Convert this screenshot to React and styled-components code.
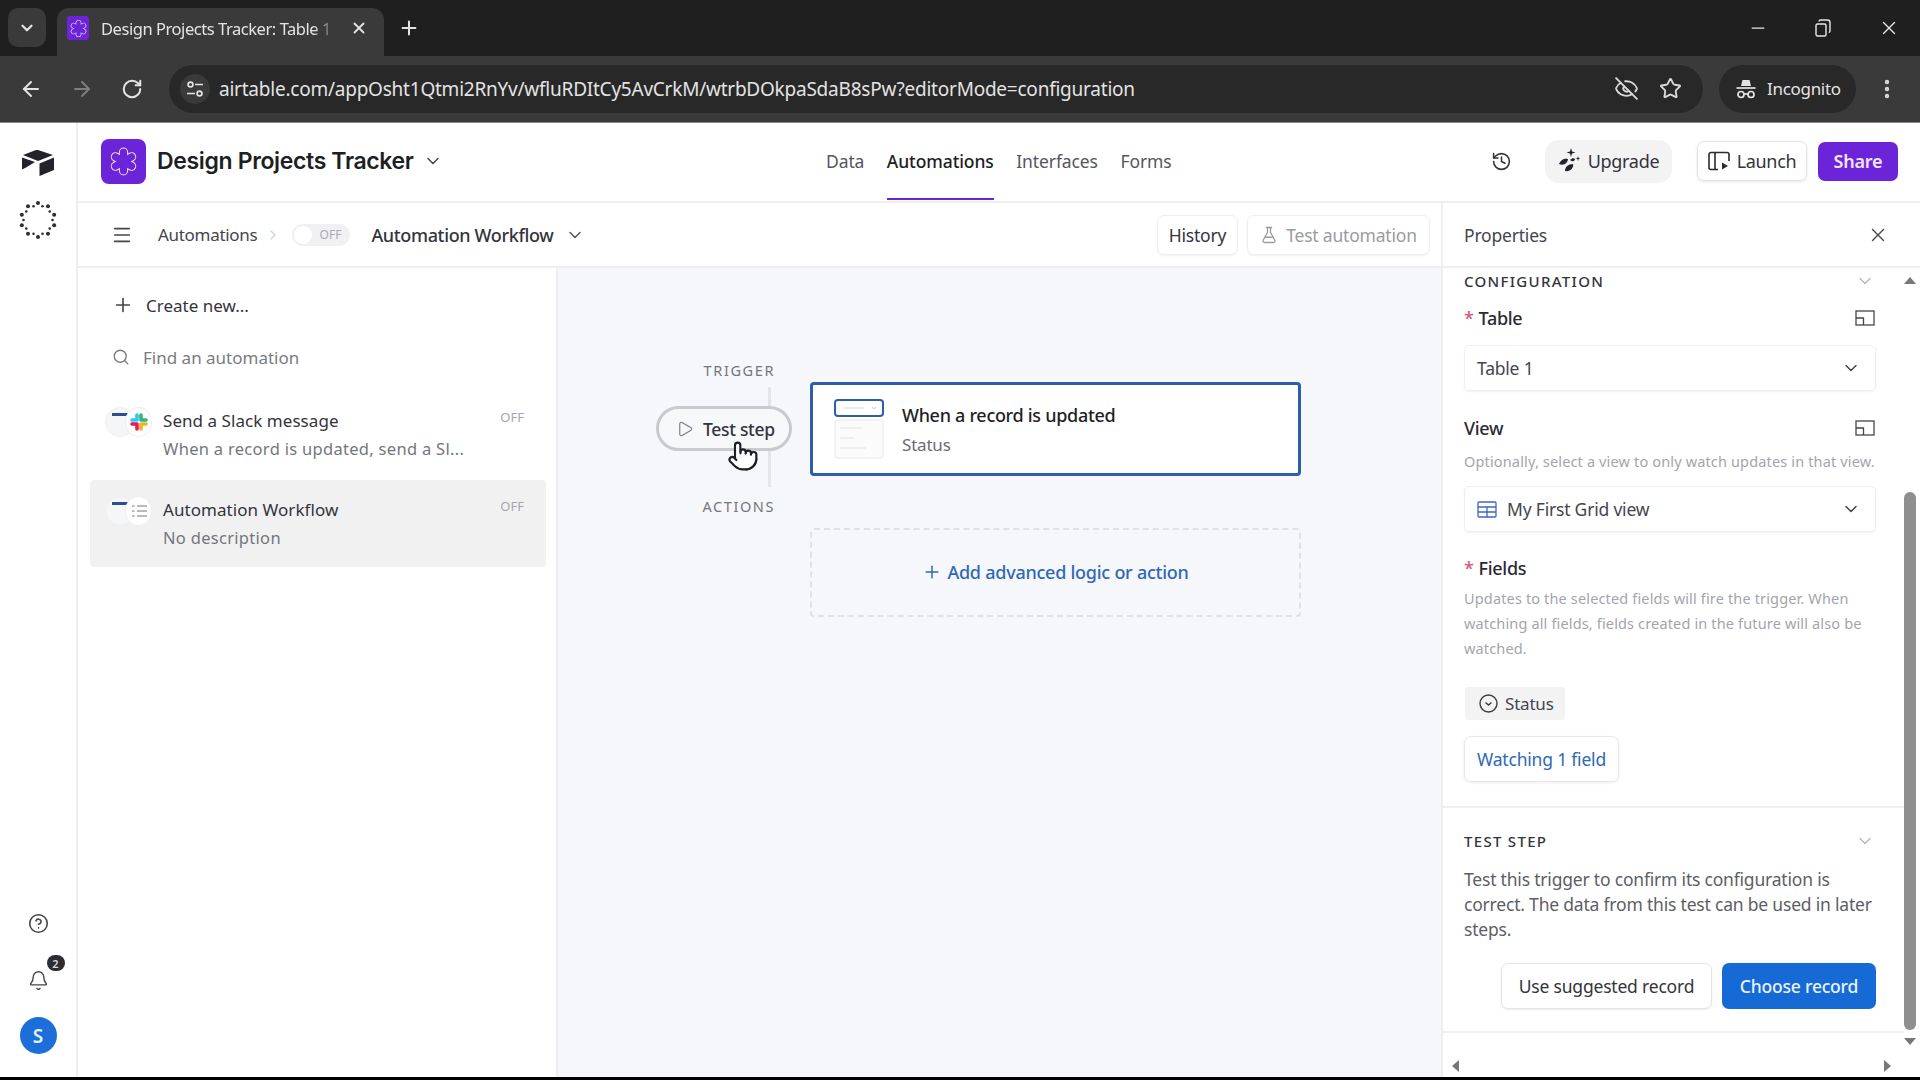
import React from "react";
import styled, { createGlobalStyle } from "styled-components";
import {
  ArrowLeft,
  ArrowRight,
  Bell,
  ChevronDown,
  CircleHelp,
  EyeOff,
  FlaskConical,
  History,
  Menu,
  Minus,
  MoreVertical,
  Play,
  Plus,
  Pointer,
  RotateCw,
  Search,
  Star,
  X,
} from "lucide-react";

const GlobalStyle = createGlobalStyle`
  html, body {
    margin: 0;
    padding: 0;
    background: #fff;
    font-family: "Noto Sans", "Open Sans", sans-serif;
    color: #1d1f25;
  }
  * { box-sizing: border-box; }
`;

function AppMark({ size }) {
  const angles = [0, 60, 120];
  return (
    <svg width={size} height={size} viewBox="0 0 24 24">
      {angles.map((a) => (
        <rect key={a} x="9.200" y="2" width="5.600" height="20" rx="2.800" fill="none" stroke="#f3dcff" strokeWidth="1.600" transform={`rotate(${a} 12 12)`} />
      ))}
      {angles.map((a) => (
        <rect key={a} x="9.200" y="2" width="5.600" height="20" rx="2.800" fill="#6b24d8" transform={`rotate(${a} 12 12)`} />
      ))}
    </svg>
  );
}

function AirtableLogo() {
  return (
    <svg width="34" height="28" viewBox="0 0 34 28">
      <path d="M15 1 2 6l15 6 15-6-15-5Z" fill="#23232b" />
      <path d="M18.500 14.500V27L33 21V8.500l-14.500 6Z" fill="#23232b" />
      <path d="M1 8.500v12l4 -2 9-5.500-13-4.500Z" fill="#23232b" />
    </svg>
  );
}

function LoaderRing() {
  const dots = Array.from({ length: 20 }, (_, i) => i);
  return (
    <svg width="38" height="38" viewBox="0 0 38 38">
      {dots.map((i) => {
        const t = (i / 20) * Math.PI * 2;
        const r = i % 2 ? 17 : 14.5;
        return <circle key={i} cx={19 + r * Math.cos(t)} cy={19 + r * Math.sin(t)} r={i % 2 ? 2 : 1.3} fill="#2e2e36" />;
      })}
    </svg>
  );
}

function TuneIcon() {
  return (
    <svg width="20" height="20" viewBox="0 0 20 20" fill="none" stroke="#e3e3e3" strokeWidth="1.7">
      <circle cx="5.500" cy="5.500" r="2.400" />
      <path d="M10 5.500h8M2 14.500h8" />
      <circle cx="14.500" cy="14.500" r="2.400" />
    </svg>
  );
}

function RestoreIcon() {
  return (
    <svg width="16" height="18" viewBox="0 0 16 18" fill="none" stroke="#e8e8e8" strokeWidth="1.400">
      <rect x="1" y="5" width="10" height="12" rx="1.500" />
      <path d="M4 2.500C4 1.600 4.600 1 5.500 1h7C14 1 15 2 15 3.500V12c0 .8-.6 1.400-1.300 1.400" />
    </svg>
  );
}

function IncognitoIcon() {
  return (
    <svg width="22" height="22" viewBox="0 0 22 22" fill="none" stroke="#e3e3e3" strokeWidth="1.700">
      <path d="M6 8l1.500-6h7L16 8" fill="#e3e3e3" stroke="none" />
      <path d="M1.500 10h19" />
      <circle cx="6" cy="16.500" r="3" />
      <circle cx="16" cy="16.500" r="3" />
      <path d="M9 16h4" />
    </svg>
  );
}

function UpgradeIcon() {
  return (
    <svg width="24" height="26" viewBox="0 0 24 26" fill="#23232b">
      <path d="M13 0l1 3.500 3.500 1-3.500 1-1 3.500-1-3.500-3.500-1 3.500-1z" />
      <path d="M20 8l.6 1.900 1.900.6-1.900.6-.6 1.900-.6-1.900-1.900-.6 1.900-.6z" />
      <path d="M1 16c2-5 6-6 9-5-.5 4-4 7-9 5Z" />
      <path d="M7 23c0-4 3-7 8-7 1 4-3 8-8 7Z" />
      <path d="M12 12c2-2 4-2 5-1-.4 2-2 3.500-5 1Z" />
    </svg>
  );
}

function LaunchIcon() {
  return (
    <svg width="22" height="20" viewBox="0 0 22 20" fill="none" stroke="#2a2a33" strokeWidth="1.600">
      <path d="M10 18.500H3a2 2 0 0 1-2-2v-13a2 2 0 0 1 2-2h16a2 2 0 0 1 2 2V10" />
      <path d="M7 1.500v17" />
      <path d="M14 11.500l6 3.500-6 3.500z" fill="#2a2a33" stroke="none" />
    </svg>
  );
}

function SlackLogo() {
  return (
    <svg width="18" height="18" viewBox="0 0 18 18" fill="none" strokeWidth="3.600" strokeLinecap="round">
      <path d="M7 2v5" stroke="#36c5f0" />
      <path d="M2 7h3" stroke="#36c5f0" />
      <path d="M16 7h-5" stroke="#2eb67d" />
      <path d="M11 2v3" stroke="#2eb67d" />
      <path d="M11 16v-5" stroke="#ecb22e" />
      <path d="M16 11h-3" stroke="#ecb22e" />
      <path d="M2 11h5" stroke="#e01e5a" />
      <path d="M7 16v-3" stroke="#e01e5a" />
    </svg>
  );
}

function ChecklistIcon() {
  return (
    <svg width="16" height="14" viewBox="0 0 16 14" fill="none" stroke="#a3a4aa" strokeWidth="1.400">
      <path d="M6 2h10M6 7h10M6 12h10M1 2h2.500M1 7h2.500M1 12h2.500" />
    </svg>
  );
}

function ExpandIcon() {
  return (
    <svg width="20" height="16" viewBox="0 0 20 16" fill="none" stroke="#44454d" strokeWidth="1.300">
      <rect x="1" y="1" width="18" height="14" />
      <path d="M1 8h7.500v7" />
    </svg>
  );
}

function GridIcon() {
  return (
    <svg width="20" height="17" viewBox="0 0 20 17" fill="none" stroke="#3f66c4" strokeWidth="1.300">
      <rect x="1" y="1" width="18" height="15" rx="1" />
      <path d="M1 6h18M1 11h18M10 6v10" />
    </svg>
  );
}

function StatusIcon() {
  return (
    <svg width="19" height="19" viewBox="0 0 19 19" fill="none" stroke="#3b3c44" strokeWidth="1.400">
      <circle cx="9.500" cy="9.500" r="8.500" />
      <path d="M6.500 8.500l3 2.500 3-2.500" />
    </svg>
  );
}

function TriggerThumb() {
  return (
    <svg width="50" height="60" viewBox="0 0 50 60" fill="none">
      <rect x="1" y="1" width="48" height="16" rx="3" fill="#fff" stroke="#2d5ea8" strokeWidth="2" />
      <path d="M10 9h20" stroke="#e8ebf0" strokeWidth="2" />
      <path d="M38 8l2 2 2-2" stroke="#c8cad0" strokeWidth="1" />
      <rect x="1" y="21" width="48" height="38" rx="3" fill="#fbfbfc" stroke="#f0f0f2" strokeWidth="1.500" />
      <path d="M6 29h22M6 39h14M6 49h26" stroke="#eeeff1" strokeWidth="2" />
    </svg>
  );
}

const Page = styled.div`
  width: 1920px;
  height: 1080px;
  display: flex;
  flex-direction: column;
  overflow: hidden;
  background: #fff;
`;

const TabStrip = styled.div`
  height: 56px;
  flex: none;
  background: #1f1f1f;
  display: flex;
  align-items: flex-end;
  padding-left: 8px;
`;

const TabSearch = styled.div`
  width: 38px;
  height: 39px;
  margin-bottom: 9px;
  border-radius: 10px;
  background: #3a3a3a;
  color: #e3e3e3;
  display: flex;
  align-items: center;
  justify-content: center;
`;

const Tab = styled.div`
  width: 327px;
  height: 48px;
  margin-left: 11px;
  padding: 0 16px 8px 10px;
  border-radius: 12px 12px 0 0;
  background: #3a3a3a;
  color: #e3e3e3;
  display: flex;
  align-items: center;
`;

const Favicon = styled.div`
  width: 22px;
  height: 24px;
  border-radius: 3px;
  background: #6b24d8;
  display: flex;
  align-items: center;
  justify-content: center;
`;

const TabTitle = styled.span`
  margin-left: 12px;
  width: 236px;
  overflow: hidden;
  white-space: nowrap;
  font-size: 16.500px;
  letter-spacing: -0.45px;
  -webkit-mask-image: linear-gradient(90deg, #000 90%, transparent);
`;

const TabClose = styled.div`
  margin-left: 13px;
  display: flex;
`;

const NewTab = styled.div`
  margin: 0 0 17px 14px;
  color: #e3e3e3;
  display: flex;
`;

const WindowControls = styled.div`
  margin-left: auto;
  height: 56px;
  display: flex;
  align-items: center;
  gap: 47px;
  padding-right: 20px;
  color: #e8e8e8;
`;

const Toolbar = styled.div`
  height: 67px;
  flex: none;
  background: #3a3a3a;
  display: flex;
  align-items: center;
  padding: 0 0 1px 19px;
  border-bottom: 1px solid #8a8a8a;
`;

const NavButtons = styled.div`
  display: flex;
  align-items: center;
  gap: 27px;
  color: #e3e3e3;
`;

const AddressBar = styled.div`
  width: 1534px;
  height: 48px;
  margin-left: 26px;
  border-radius: 24px;
  background: #282828;
  display: flex;
  align-items: center;
  padding: 0 21px 0 11px;
`;

const SiteIcon = styled.div`
  width: 30px;
  height: 30px;
  border-radius: 50%;
  background: #3a3a3a;
  display: flex;
  align-items: center;
  justify-content: center;
`;

const UrlText = styled.span`
  margin-left: 9px;
  font-size: 19px;
  letter-spacing: -0.23px;
  color: #e3e3e3;
  white-space: nowrap;
`;

const AddressActions = styled.div`
  margin-left: auto;
  display: flex;
  align-items: center;
  gap: 20px;
  color: #d8d8d8;
`;

const IncognitoPill = styled.div`
  width: 137px;
  height: 48px;
  margin-left: 16px;
  border-radius: 24px;
  background: #282828;
  color: #e3e3e3;
  display: flex;
  align-items: center;
  gap: 10px;
  padding-left: 16px;
  font-size: 17px;
  letter-spacing: -0.3px;
`;

const ToolbarMenu = styled.div`
  margin-left: 19px;
  color: #d8d8d8;
  display: flex;
`;

const Body = styled.div`
  flex: 1;
  min-height: 0;
  display: flex;
`;

const Rail = styled.div`
  width: 78px;
  flex: none;
  border-right: 2px solid #efeff1;
  display: flex;
  flex-direction: column;
  align-items: center;
  padding: 26px 0 23px;
`;

const RailGroup = styled.div`
  display: flex;
  flex-direction: column;
  align-items: center;
  gap: ${(p) => p.$gap}px;
  margin-top: ${(p) => p.$top || 0};
  color: #44454d;
`;

const BellWrap = styled.div`
  position: relative;
  margin-top: 10px;
  display: flex;
`;

const BellBadge = styled.span`
  position: absolute;
  top: -15px;
  right: -16px;
  width: 18px;
  height: 16px;
  border-radius: 9px;
  background: #2c2c32;
  color: #d8d8d8;
  font-size: 11px;
  font-weight: 600;
  display: flex;
  align-items: center;
  justify-content: center;
`;

const Avatar = styled.div`
  width: 37px;
  height: 37px;
  border-radius: 50%;
  background: #1c6fd8;
  color: #e6f2ff;
  font-size: 19px;
  font-weight: 600;
  display: flex;
  align-items: center;
  justify-content: center;
`;

const Main = styled.div`
  flex: 1;
  min-width: 0;
  display: flex;
  flex-direction: column;
`;

const TopBar = styled.div`
  height: 80px;
  flex: none;
  border-bottom: 2px solid #efeff1;
  display: flex;
  align-items: center;
  padding: 0 22px 2px 23px;
`;

const Brand = styled.div`
  width: 725px;
  display: flex;
  align-items: center;
`;

const BrandMark = styled.div`
  width: 45px;
  height: 45px;
  border-radius: 8px;
  background: #6b24d8;
  display: flex;
  align-items: center;
  justify-content: center;
`;

const BrandName = styled.span`
  margin-left: 11px;
  font-family: Inter, sans-serif;
  font-size: 23px;
  font-weight: 600;
  letter-spacing: -0.35px;
  white-space: nowrap;
`;

const BrandCaret = styled.span`
  display: flex;
  margin-left: 9px;
  color: #44454d;
`;

const NavTabs = styled.div`
  height: 78px;
  display: flex;
  gap: 22.500px;
`;

const NavTab = styled.div`
  height: 100%;
  display: flex;
  align-items: center;
  font-size: 17.500px;
  font-weight: ${(p) => (p.$active ? 500 : 400)};
  color: ${(p) => (p.$active ? "#1d1f25" : "#55565e")};
  box-shadow: ${(p) => (p.$active ? "inset 0 -2px 0 #6b24d8" : "none")};
  letter-spacing: -0.1px;
`;

const TopActions = styled.div`
  margin-left: auto;
  display: flex;
  align-items: center;
`;

const HistoryNudge = styled.span`
  display: flex;
  margin-right: 2px;
`;

const UpgradePill = styled.div`
  width: 127px;
  height: 43px;
  margin-left: 31px;
  border-radius: 14px;
  background: #f3f3f4;
  display: flex;
  align-items: center;
  justify-content: center;
  gap: 6px;
  font-size: 18px;
  color: #33343c;
  letter-spacing: -0.3px;
`;

const LaunchButton = styled.div`
  width: 110px;
  height: 40px;
  margin-left: 25px;
  border-radius: 7px;
  border: 1px solid #e4e4e8;
  box-shadow: 0 1px 3px rgba(0, 0, 0, 0.1);
  display: flex;
  align-items: center;
  justify-content: center;
  gap: 7px;
  font-size: 18px;
  color: #33343c;
  letter-spacing: -0.35px;
`;

const ShareButton = styled.div`
  width: 80px;
  height: 39px;
  margin-left: 11px;
  border-radius: 7px;
  background: #6b24d8;
  color: #f3e5ff;
  font-size: 18px;
  font-weight: 600;
  letter-spacing: -0.2px;
  display: flex;
  align-items: center;
  justify-content: center;
`;

const SubBar = styled.div`
  height: 65px;
  flex: none;
  border-bottom: 2px solid #efeff1;
  display: flex;
`;

const SubLeft = styled.div`
  flex: 1;
  display: flex;
  align-items: center;
  padding: 0 11px 0 33px;
`;

const Crumb = styled.span`
  margin-left: 25px;
  font-size: 17px;
  color: #44454d;
  letter-spacing: -0.3px;
`;

const CrumbArrow = styled.span`
  margin-left: 8px;
  display: flex;
  color: #d2d3d8;
`;

const Toggle = styled.div`
  width: 58px;
  height: 22px;
  margin-left: 11px;
  border-radius: 11px;
  background: #f1f1f3;
  display: flex;
  align-items: center;
  justify-content: flex-end;
  padding-right: 9px;
  position: relative;
  font-size: 12px;
  color: #a9aab0;

  &::before {
    content: "";
    position: absolute;
    left: 2px;
    top: 2px;
    width: 18px;
    height: 18px;
    border-radius: 50%;
    background: #fff;
  }
`;

const WorkflowName = styled.span`
  margin-left: 21px;
  font-size: 18px;
  font-weight: 500;
  color: #33343c;
  letter-spacing: -0.35px;
  white-space: nowrap;
`;

const WorkflowCaret = styled.span`
  margin-left: 12px;
  display: flex;
  color: #55565e;
`;

const HeaderButton = styled.div`
  height: 40px;
  width: ${(p) => p.$w}px;
  margin-left: ${(p) => p.$ml || 0};
  border-radius: 7px;
  border: 1px solid #eeeef0;
  box-shadow: 0 1px 2px rgba(0, 0, 0, 0.06);
  display: flex;
  align-items: center;
  justify-content: center;
  gap: 8px;
  font-size: 17.500px;
  letter-spacing: -0.2px;
  color: ${(p) => (p.$muted ? "#9a9ba1" : "#33343c")};
`;

const SubRight = styled.div`
  width: 479px;
  flex: none;
  border-left: 2px solid #efeff1;
  display: flex;
  align-items: center;
  justify-content: space-between;
  padding: 0 31px 0 21px;
  font-size: 17.500px;
  color: #44454d;
  letter-spacing: -0.2px;
`;

const Content = styled.div`
  flex: 1;
  min-height: 0;
  display: flex;
`;

const Sidebar = styled.div`
  width: 480px;
  flex: none;
  border-right: 2px solid #efeff1;
  padding: 19px 10px 0 12px;
`;

const SideAction = styled.div`
  height: 36px;
  margin-top: ${(p) => p.$mt || 0}px;
  padding-left: ${(p) => p.$pad}px;
  display: flex;
  align-items: center;
  gap: ${(p) => p.$gap}px;
  font-size: 17px;
  letter-spacing: 0;
  color: ${(p) => (p.$muted ? "#7a7b82" : "#33343c")};
`;

const AutomationList = styled.div`
  margin-top: 16px;
  display: flex;
  flex-direction: column;
  gap: 2px;
`;

const AutomationItem = styled.div`
  height: 87px;
  padding: 16px 22px 0 15px;
  border-radius: 4px;
  background: ${(p) => (p.$active ? "#f1f1f2" : "transparent")};
  display: flex;
`;

const IconPair = styled.div`
  width: 48px;
  height: 32px;
  flex: none;
  position: relative;
`;

const IconDisc = styled.div`
  position: absolute;
  top: 0;
  left: ${(p) => (p.$right ? "20px" : "0")};
  width: ${(p) => (p.$right ? "27px" : "30px")};
  height: 30px;
  border-radius: 50%;
  background: ${(p) => (p.$right ? "#fff" : "#f5f6f8")};
  border: 1px solid #eeeef1;
  display: flex;
  align-items: center;
  justify-content: center;

  &.bar::before {
    content: "";
    position: absolute;
    left: 6px;
    top: 5px;
    width: 16px;
    height: 3px;
    background: #2d4f8c;
  }
`;

const ItemText = styled.div`
  margin-left: 10px;
  flex: 1;
  min-width: 0;
`;

const ItemTitle = styled.div`
  margin-top: 1px;
  font-size: 17px;
  line-height: 26px;
  letter-spacing: 0.05px;
  color: #33343c;
`;

const ItemDesc = styled.div`
  margin-top: 3px;
  font-size: 16.500px;
  line-height: 24px;
  letter-spacing: 0.3px;
  color: #75767d;
  white-space: nowrap;
`;

const OffTag = styled.span`
  font-size: 13px;
  line-height: 20px;
  color: #a5a6ac;
`;

const Canvas = styled.div`
  flex: 1;
  min-width: 0;
  background: #f5f7fa;
  padding: 93px 0 0 98px;
  display: flex;
`;

const StepRail = styled.div`
  width: 136px;
  display: flex;
  flex-direction: column;
`;

const RailLabel = styled.div`
  margin-top: ${(p) => p.$mt || 0}px;
  padding-right: 17px;
  text-align: right;
  font-size: 14.500px;
  line-height: 18px;
  letter-spacing: 1.6px;
  color: #75767d;
`;

const Connector = styled.div`
  width: 3px;
  height: ${(p) => p.$h}px;
  margin: ${(p) => p.$mt || 0}px 0 0 112px;
  background: #e4e5e8;
`;

const TestStepPill = styled.div`
  height: 45px;
  border: 3px solid #c9cacd;
  border-radius: 23px;
  background: #f7f8fa;
  display: flex;
  align-items: center;
  gap: 9px;
  padding-left: 17px;
  font-size: 17.500px;
  font-weight: 500;
  letter-spacing: -0.3px;
  color: #33343c;
  position: relative;
`;

const HandCursor = styled.div`
  position: absolute;
  left: 68px;
  top: 31px;
  display: flex;
  color: #1d1f25;
`;

const StepColumn = styled.div`
  width: 491px;
  margin-left: 18px;
  padding-top: 21px;
`;

const TriggerCard = styled.div`
  height: 94px;
  border: 3px solid #2d5ea8;
  border-radius: 4px;
  background: #fff;
  display: flex;
  align-items: center;
  padding-left: 21px;
  gap: 18px;
`;

const CardTitle = styled.div`
  margin-top: 2px;
  font-size: 18px;
  font-weight: 500;
  line-height: 26px;
  letter-spacing: -0.3px;
`;

const CardSub = styled.div`
  margin-top: 4px;
  font-size: 17px;
  line-height: 26px;
  letter-spacing: -0.2px;
  color: #6a6b72;
`;

const AddAction = styled.div`
  height: 89px;
  margin-top: 52px;
  padding-bottom: 2px;
  border: 2px dashed #e0e1e6;
  border-radius: 4px;
  display: flex;
  align-items: center;
  justify-content: center;
  gap: 5px;
  font-size: 18px;
  font-weight: 500;
  letter-spacing: -0.25px;
  color: #2f68b8;
`;

const Properties = styled.div`
  width: 479px;
  flex: none;
  border-left: 2px solid #efeff1;
  display: flex;
  flex-direction: column;
  position: relative;
`;

const PropScroll = styled.div`
  flex: 1;
  min-height: 0;
  display: flex;
`;

const PropPane = styled.div`
  flex: 1;
  min-width: 0;
`;

const PropSection = styled.div`
  padding: ${(p) => p.$pad};
  border-bottom: ${(p) => (p.$line ? "2px solid #efeff1" : "none")};
`;

const SectionHead = styled.div`
  height: 26px;
  display: flex;
  align-items: center;
  justify-content: space-between;
  padding-right: 1px;
  font-size: 15px;
  font-weight: 500;
  letter-spacing: 1.3px;
  color: #33343c;
  text-transform: uppercase;
  svg {
    color: #b6b7bc;
  }
`;

const FieldLabel = styled.div`
  height: 24px;
  margin-top: ${(p) => p.$mt}px;
  display: flex;
  align-items: center;
  justify-content: space-between;
  font-size: 18px;
  font-weight: 500;
  letter-spacing: -0.3px;
  color: #2a2b33;
  padding-right: 1px;
`;

const Required = styled.span`
  color: #d8567a;
  margin-right: 5px;
`;

const Hint = styled.div`
  margin-top: ${(p) => p.$mt}px;
  font-size: 14.500px;
  line-height: 25px;
  letter-spacing: 0.15px;
  color: #a4a5ab;
`;

const SelectBox = styled.div`
  height: 46px;
  margin-top: ${(p) => p.$mt || 15}px;
  border: 1px solid #eeeef1;
  border-radius: 5px;
  box-shadow: 0 1px 2px rgba(0, 0, 0, 0.06);
  display: flex;
  align-items: center;
  gap: 10px;
  padding: 0 14px 0 12px;
  font-size: 17.500px;
  letter-spacing: -0.2px;
  color: #44454d;
  svg:last-child {
    margin-left: auto;
  }
`;

const FieldChip = styled.div`
  width: 100px;
  height: 33px;
  margin: 26px 0 0 1px;
  border-radius: 3px;
  background: #f3f3f4;
  display: flex;
  align-items: center;
  gap: 7px;
  padding-left: 14px;
  font-size: 17px;
  letter-spacing: -0.2px;
  color: #44454d;
`;

const WatchButton = styled.div`
  width: 155px;
  height: 46px;
  margin-top: 16px;
  border: 1px solid #e8e8ec;
  border-radius: 7px;
  box-shadow: 0 1px 3px rgba(0, 0, 0, 0.08);
  display: flex;
  align-items: center;
  justify-content: center;
  font-size: 17.500px;
  letter-spacing: -0.2px;
  color: #2f68b8;
`;

const TestCopy = styled.p`
  margin: 13px 0 0;
  font-size: 17.500px;
  line-height: 25px;
  letter-spacing: -0.2px;
  color: #5d5e66;
`;

const TestActions = styled.div`
  margin-top: 21px;
  display: flex;
  justify-content: flex-end;
  gap: 10px;
`;

const OutlineButton = styled.div`
  width: 211px;
  height: 46px;
  border: 1px solid #e4e4e8;
  border-radius: 7px;
  box-shadow: 0 1px 2px rgba(0, 0, 0, 0.08);
  display: flex;
  align-items: center;
  justify-content: center;
  font-size: 17.500px;
  letter-spacing: -0.2px;
  color: #33343c;
`;

const PrimaryButton = styled.div`
  width: 154px;
  height: 46px;
  border-radius: 7px;
  background: #166ad6;
  color: #e9f3ff;
  display: flex;
  align-items: center;
  justify-content: center;
  font-size: 17.500px;
  font-weight: 500;
  letter-spacing: -0.2px;
`;

const VScroll = styled.div`
  width: 16px;
  flex: none;
  position: relative;
  padding-top: 224px;
`;

const VThumb = styled.div`
  width: 12px;
  height: 538px;
  border-radius: 6px;
  background: #8f8f8f;
`;

const ScrollArrow = styled.div`
  position: absolute;
  width: 0;
  height: 0;
  border-style: solid;
  ${(p) => p.$pos}
`;

const HScroll = styled.div`
  height: 44px;
  flex: none;
  position: relative;
`;

const BottomEdge = styled.div`
  height: 3px;
  flex: none;
  background: #000;
`;

export default function App() {
  return (
    <Page>
      <GlobalStyle />
      <TabStrip>
        <TabSearch>
          <ChevronDown size={18} strokeWidth={3} />
        </TabSearch>
        <Tab>
          <Favicon>
            <AppMark size={19} />
          </Favicon>
          <TabTitle>Design Projects Tracker: Table 1</TabTitle>
          <TabClose>
            <X size={18} strokeWidth={2.4} />
          </TabClose>
        </Tab>
        <NewTab>
          <Plus size={22} strokeWidth={2.2} />
        </NewTab>
        <WindowControls>
          <Minus size={20} strokeWidth={1.5} />
          <RestoreIcon />
          <X size={22} strokeWidth={1.5} />
        </WindowControls>
      </TabStrip>

      <Toolbar>
        <NavButtons>
          <ArrowLeft size={24} strokeWidth={2} />
          <ArrowRight size={24} strokeWidth={2} color="#7d7d7d" />
          <RotateCw size={22} strokeWidth={2.2} />
        </NavButtons>
        <AddressBar>
          <SiteIcon>
            <TuneIcon />
          </SiteIcon>
          <UrlText>airtable.com/appOsht1Qtmi2RnYv/wfluRDItCy5AvCrkM/wtrbDOkpaSdaB8sPw?editorMode=configuration</UrlText>
          <AddressActions>
            <EyeOff size={25} strokeWidth={1.8} />
            <Star size={23} strokeWidth={2} />
          </AddressActions>
        </AddressBar>
        <IncognitoPill>
          <IncognitoIcon />
          Incognito
        </IncognitoPill>
        <ToolbarMenu>
          <MoreVertical size={24} strokeWidth={2.4} />
        </ToolbarMenu>
      </Toolbar>

      <Body>
        <Rail>
          <RailGroup $gap={24}>
            <AirtableLogo />
            <LoaderRing />
          </RailGroup>
          <RailGroup $gap={26} $top="auto">
            <CircleHelp size={21} strokeWidth={1.8} />
            <BellWrap>
              <Bell size={21} strokeWidth={1.6} />
              <BellBadge>2</BellBadge>
            </BellWrap>
            <Avatar>S</Avatar>
          </RailGroup>
        </Rail>

        <Main>
          <TopBar>
            <Brand>
              <BrandMark>
                <AppMark size={31} />
              </BrandMark>
              <BrandName>Design Projects Tracker</BrandName>
              <BrandCaret>
                <ChevronDown size={20} strokeWidth={1.8} />
              </BrandCaret>
            </Brand>
            <NavTabs>
              <NavTab>Data</NavTab>
              <NavTab $active>Automations</NavTab>
              <NavTab>Interfaces</NavTab>
              <NavTab>Forms</NavTab>
            </NavTabs>
            <TopActions>
              <HistoryNudge>
                <History size={21} strokeWidth={1.8} color="#33343c" />
              </HistoryNudge>
              <UpgradePill>
                <UpgradeIcon />
                Upgrade
              </UpgradePill>
              <LaunchButton>
                <LaunchIcon />
                Launch
              </LaunchButton>
              <ShareButton>Share</ShareButton>
            </TopActions>
          </TopBar>

          <SubBar>
            <SubLeft>
              <Menu size={22} strokeWidth={1.8} color="#44454d" />
              <Crumb>Automations</Crumb>
              <CrumbArrow>
                <ChevronDown size={16} style={{ transform: "rotate(-90deg)" }} />
              </CrumbArrow>
              <Toggle>OFF</Toggle>
              <WorkflowName>Automation Workflow</WorkflowName>
              <WorkflowCaret>
                <ChevronDown size={20} strokeWidth={1.8} />
              </WorkflowCaret>
              <HeaderButton $w={81} $ml="auto">History</HeaderButton>
              <HeaderButton $w={183} $ml="9px" $muted>
                <FlaskConical size={18} strokeWidth={1.7} />
                Test automation
              </HeaderButton>
            </SubLeft>
            <SubRight>
              Properties
              <X size={22} strokeWidth={1.5} color="#44454d" />
            </SubRight>
          </SubBar>

          <Content>
            <Sidebar>
              <SideAction $pad={22} $gap={12}>
                <Plus size={22} strokeWidth={1.8} color="#44454d" />
                Create new...
              </SideAction>
              <SideAction $mt={16} $pad={22} $gap={13} $muted>
                <Search size={18} strokeWidth={1.8} />
                Find an automation
              </SideAction>
              <AutomationList>
                <AutomationItem>
                  <IconPair>
                    <IconDisc className="bar" />
                    <IconDisc $right>
                      <SlackLogo />
                    </IconDisc>
                  </IconPair>
                  <ItemText>
                    <ItemTitle>Send a Slack message</ItemTitle>
                    <ItemDesc>When a record is updated, send a Sl...</ItemDesc>
                  </ItemText>
                  <OffTag>OFF</OffTag>
                </AutomationItem>
                <AutomationItem $active>
                  <IconPair>
                    <IconDisc className="bar" />
                    <IconDisc $right>
                      <ChecklistIcon />
                    </IconDisc>
                  </IconPair>
                  <ItemText>
                    <ItemTitle>Automation Workflow</ItemTitle>
                    <ItemDesc>No description</ItemDesc>
                  </ItemText>
                  <OffTag>OFF</OffTag>
                </AutomationItem>
              </AutomationList>
            </Sidebar>

            <Canvas>
              <StepRail>
                <RailLabel>TRIGGER</RailLabel>
                <Connector $h={19} $mt={8} />
                <TestStepPill>
                  <Play size={18} strokeWidth={1.5} color="#7a7b82" />
                  Test step
                  <HandCursor>
                    <Pointer size={32} strokeWidth={1.6} fill="#fff" />
                  </HandCursor>
                </TestStepPill>
                <Connector $h={36} />
                <RailLabel $mt={10}>ACTIONS</RailLabel>
              </StepRail>
              <StepColumn>
                <TriggerCard>
                  <TriggerThumb />
                  <div>
                    <CardTitle>When a record is updated</CardTitle>
                    <CardSub>Status</CardSub>
                  </div>
                </TriggerCard>
                <AddAction>
                  <Plus size={20} strokeWidth={1.8} />
                  Add advanced logic or action
                </AddAction>
              </StepColumn>
            </Canvas>

            <Properties>
              <PropScroll>
                <PropPane>
                  <PropSection $pad="0 28px 24px 21px" $line>
                    <SectionHead>
                      Configuration
                      <ChevronDown size={20} strokeWidth={1.6} />
                    </SectionHead>
                    <FieldLabel $mt={12}>
                      <span>
                        <Required>*</Required>Table
                      </span>
                      <ExpandIcon />
                    </FieldLabel>
                    <SelectBox>
                      Table 1
                      <ChevronDown size={20} strokeWidth={1.8} />
                    </SelectBox>
                    <FieldLabel $mt={25}>
                      View
                      <ExpandIcon />
                    </FieldLabel>
                    <Hint $mt={9}>Optionally, select a view to only watch updates in that view.</Hint>
                    <SelectBox $mt={12}>
                      <GridIcon />
                      My First Grid view
                      <ChevronDown size={20} strokeWidth={1.8} />
                    </SelectBox>
                    <FieldLabel $mt={24}>
                      <span>
                        <Required>*</Required>Fields
                      </span>
                    </FieldLabel>
                    <Hint $mt={6}>
                      Updates to the selected fields will fire the trigger. When watching all fields, fields created in
                      the future will also be watched.
                    </Hint>
                    <FieldChip>
                      <StatusIcon />
                      Status
                    </FieldChip>
                    <WatchButton>Watching 1 field</WatchButton>
                  </PropSection>
                  <PropSection $pad="20px 28px 22px 21px" $line>
                    <SectionHead>
                      Test step
                      <ChevronDown size={20} strokeWidth={1.6} />
                    </SectionHead>
                    <TestCopy>
                      Test this trigger to confirm its configuration is correct. The data from this test can be used in
                      later steps.
                    </TestCopy>
                    <TestActions>
                      <OutlineButton>Use suggested record</OutlineButton>
                      <PrimaryButton>Choose record</PrimaryButton>
                    </TestActions>
                  </PropSection>
                </PropPane>
                <VScroll>
                  <ScrollArrow $pos="top: 9px; left: 0; border-width: 0 6px 7px; border-color: transparent transparent #777;" />
                  <VThumb />
                  <ScrollArrow $pos="top: 770px; left: 0; border-width: 7px 6px 0; border-color: #777 transparent transparent;" />
                </VScroll>
              </PropScroll>
              <HScroll>
                <ScrollArrow $pos="top: 27px; left: 9px; border-width: 6px 7px 6px 0; border-color: transparent #777 transparent transparent;" />
                <ScrollArrow $pos="top: 27px; left: 441px; border-width: 6px 0 6px 7px; border-color: transparent transparent transparent #777;" />
              </HScroll>
            </Properties>
          </Content>
        </Main>
      </Body>
      <BottomEdge />
    </Page>
  );
}
